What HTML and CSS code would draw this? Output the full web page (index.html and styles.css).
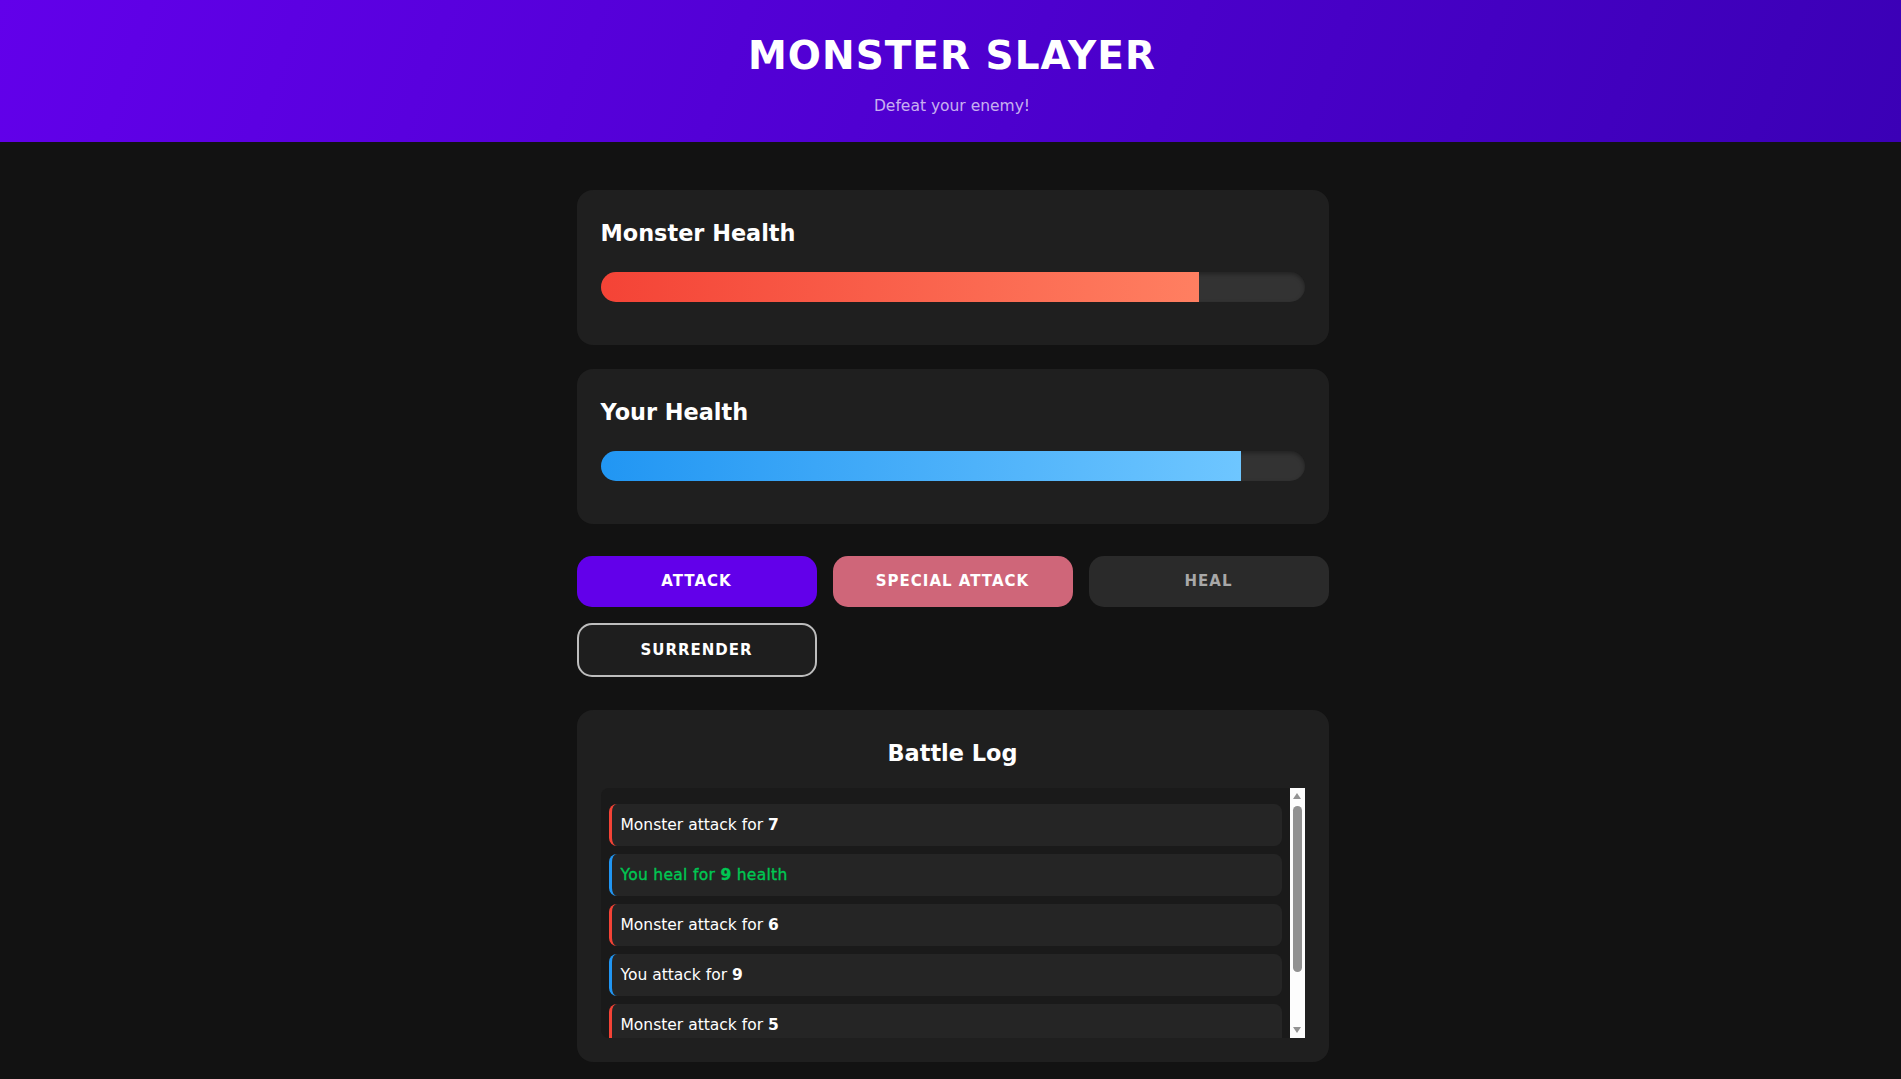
FILE: index.html
```html
<!DOCTYPE html>
<html lang="en">
<head>
<meta charset="utf-8">
<title>Monster Slayer</title>
<link rel="stylesheet" href="styles.css">
</head>
<body>
<header class="top">
  <h1 class="title">MONSTER SLAYER</h1>
  <p class="subtitle">Defeat your enemy!</p>
</header>
<main class="game">
  <section class="card">
    <h2 class="card-title">Monster Health</h2>
    <div class="bar"><div class="fill fill-monster" style="width: 85%"></div></div>
  </section>
  <section class="card">
    <h2 class="card-title">Your Health</h2>
    <div class="bar"><div class="fill fill-player" style="width: 91%"></div></div>
  </section>
  <section class="controls">
    <button class="btn btn-attack">ATTACK</button>
    <button class="btn btn-special">SPECIAL ATTACK</button>
    <button class="btn btn-heal">HEAL</button>
    <button class="btn btn-surrender">SURRENDER</button>
  </section>
  <section class="card log-card">
    <h2 class="card-title log-title">Battle Log</h2>
    <div class="log-box">
      <ul class="log">
        <li class="entry entry-monster">Monster attack for <strong>7</strong></li>
        <li class="entry entry-player entry-heal">You heal for <strong>9</strong> health</li>
        <li class="entry entry-monster">Monster attack for <strong>6</strong></li>
        <li class="entry entry-player">You attack for <strong>9</strong></li>
        <li class="entry entry-monster">Monster attack for <strong>5</strong></li>
        <li class="entry entry-player">You attack for <strong>8</strong></li>
      </ul>
      <div class="scrollbar" aria-hidden="true">
        <span class="sb-arrow sb-up"></span>
        <span class="sb-thumb"></span>
        <span class="sb-space"></span>
        <span class="sb-arrow sb-down"></span>
      </div>
    </div>
  </section>
</main>
</body>
</html>
```
FILE: styles.css
```css
* { box-sizing: border-box; }

html, body {
  margin: 0;
  padding: 0;
}

body {
  background: #121212;
  color: #ffffff;
  font-family: "DejaVu Sans", "Open Sans", sans-serif;
}

.top {
  background: linear-gradient(110deg, #6200ea 0%, #3b00b6 100%);
  padding: 32px 0 26px 3px;
  text-align: center;
}

.title {
  margin: 0;
  font-size: 39px;
  line-height: 48px;
  font-weight: 700;
  letter-spacing: 1px;
  color: #ffffff;
}

.subtitle {
  margin: 16px 0 0;
  font-size: 15.5px;
  line-height: 20px;
  color: rgba(255, 255, 255, 0.7);
}

.game {
  width: 752px;
  margin: 48px 0 0 calc(50% - 374px);
  padding-bottom: 16px;
  display: flex;
  flex-direction: column;
}

.card {
  background: #1f1f1f;
  border-radius: 16px;
  padding: 29px 24px 43px;
  margin-bottom: 24px;
}

.card-title {
  margin: 0 0 25px;
  font-size: 22.4px;
  line-height: 28px;
  font-weight: 700;
  color: #ffffff;
}

.bar {
  height: 30px;
  background: #333333;
  border-radius: 15px;
  overflow: hidden;
  box-shadow: inset 0 2px 4px rgba(0, 0, 0, 0.35);
}

.fill {
  height: 100%;
}

.fill-monster {
  background: linear-gradient(90deg, #f44336 0%, #ff7f61 100%);
}

.fill-player {
  background: linear-gradient(90deg, #2196f3 0%, #6ec6ff 100%);
}

.controls {
  margin-top: 8px;
  display: grid;
  grid-template-columns: repeat(3, 1fr);
  gap: 16px;
  margin-bottom: 33px;
}

.btn {
  font-family: "DejaVu Sans", "Open Sans", sans-serif;
  font-size: 15px;
  font-weight: 700;
  letter-spacing: 1px;
  line-height: 19px;
  padding: 16px 8px;
  border: none;
  border-radius: 15px;
  color: #ffffff;
  cursor: pointer;
}

.btn-attack { background: #6200ea; }

.btn-special { background: #cf6679; }

.btn-heal {
  background: #2a2a2a;
  color: #a8a8a8;
}

.btn-surrender {
  background: #1e1e1e;
  border: 2px solid #bdbdbd;
  padding: 15.5px 8px;
}

.log-card {
  padding: 29px 24px 24px;
  margin-bottom: 0;
}

.log-title {
  text-align: center;
  margin-bottom: 21px;
}

.log-box {
  display: flex;
  height: 250px;
  background: #1a1a1a;
  border-radius: 8px 0 0 8px;
}

.log {
  flex: 1;
  list-style: none;
  margin: 0;
  overflow: hidden;
  padding: 16px 8px;
  display: flex;
  flex-direction: column;
  gap: 8px;
}

.entry {
  flex: none;
  background: #252525;
  border-radius: 8px;
  border-left: 3px solid #f44336;
  padding: 10px 12px 10px 9px;
  font-size: 15.5px;
  line-height: 22px;
  color: #ffffff;
}

.entry strong { font-weight: 700; }

.entry-player { border-left-color: #2196f3; }

.entry-heal {
  color: #00c853;
  -webkit-text-stroke: 0.35px #00c853;
  letter-spacing: 0.3px;
}

.scrollbar {
  width: 15px;
  flex: none;
  background: #fdfdfd;
  display: flex;
  flex-direction: column;
  align-items: center;
}

.sb-arrow {
  width: 0;
  height: 0;
  border-left: 4px solid transparent;
  border-right: 4px solid transparent;
}

.sb-up {
  margin-top: 5px;
  border-bottom: 6px solid #939393;
}

.sb-down {
  margin-bottom: 5px;
  border-top: 6px solid #939393;
}

.sb-thumb {
  margin-top: 7px;
  width: 9px;
  height: 166px;
  border-radius: 5px;
  background: #919191;
}

.sb-space { flex: 1; }
```
